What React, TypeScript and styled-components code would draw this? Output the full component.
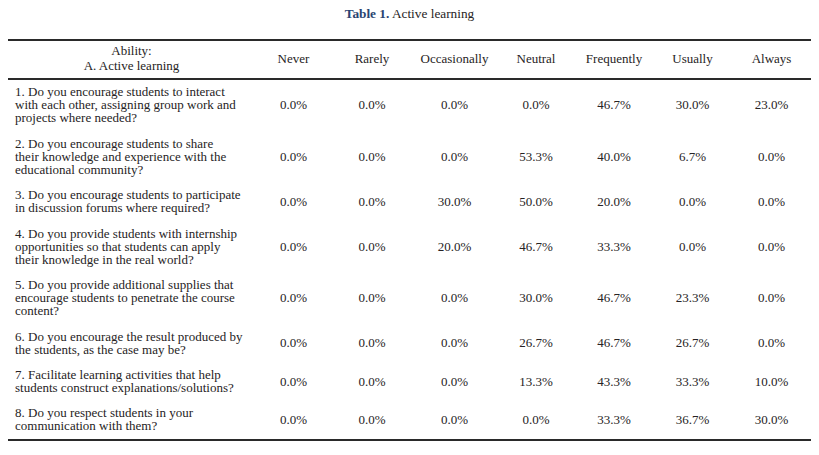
import React from "react";
import styled, { createGlobalStyle } from "styled-components";

const Global = createGlobalStyle`
  html, body { margin: 0; padding: 0; background: #ffffff; }
  body { font-family: "Liberation Serif", "Times New Roman", serif; color: #262324; }
`;

const Page = styled.div`
  width: 819px;
  height: 455px;
  padding: 6px 0 0 8px;
  box-sizing: border-box;
`;

const Title = styled.div`
  width: 803px;
  text-align: center;
  font-size: 13.3px;
  line-height: 15px;
  margin-bottom: 18px;
`;

const TitleLabel = styled.span`
  font-weight: bold;
  color: #2a4471;
`;

const Table = styled.div`
  width: 803px;
  border-top: 2px solid #2a2a2a;
  border-bottom: 2px solid #2a2a2a;
  font-size: 13px;
`;

const COLS = "247px 77px 80px 85px 78px 78px 79px 79px";

const HeaderRow = styled.div`
  display: grid;
  grid-template-columns: ${COLS};
  align-items: center;
  border-bottom: 2px solid #2a2a2a;
  padding: 2px 0 4.5px;
  line-height: 15px;
`;

const HeadCell = styled.div`
  text-align: center;
`;

const Row = styled.div`
  display: grid;
  grid-template-columns: ${COLS};
  align-items: center;
  padding: 5.6px 0 6.9px;
  line-height: 13px;
`;

const Question = styled.div`
  padding-left: 7px;
  padding-right: 4px;
  white-space: pre-line;
`;

const Value = styled.div`
  text-align: center;
`;

const columns = ["Never", "Rarely", "Occasionally", "Neutral", "Frequently", "Usually", "Always"];

const rows: { q: string; v: string[] }[] = [
  {
    q: "1. Do you encourage students to interact\nwith each other, assigning group work and\nprojects where needed?",
    v: ["0.0%", "0.0%", "0.0%", "0.0%", "46.7%", "30.0%", "23.0%"],
  },
  {
    q: "2. Do you encourage students to share\ntheir knowledge and experience with the\neducational community?",
    v: ["0.0%", "0.0%", "0.0%", "53.3%", "40.0%", "6.7%", "0.0%"],
  },
  {
    q: "3. Do you encourage students to participate\nin discussion forums where required?",
    v: ["0.0%", "0.0%", "30.0%", "50.0%", "20.0%", "0.0%", "0.0%"],
  },
  {
    q: "4. Do you provide students with internship\nopportunities so that students can apply\ntheir knowledge in the real world?",
    v: ["0.0%", "0.0%", "20.0%", "46.7%", "33.3%", "0.0%", "0.0%"],
  },
  {
    q: "5. Do you provide additional supplies that\nencourage students to penetrate the course\ncontent?",
    v: ["0.0%", "0.0%", "0.0%", "30.0%", "46.7%", "23.3%", "0.0%"],
  },
  {
    q: "6. Do you encourage the result produced by\nthe students, as the case may be?",
    v: ["0.0%", "0.0%", "0.0%", "26.7%", "46.7%", "26.7%", "0.0%"],
  },
  {
    q: "7. Facilitate learning activities that help\nstudents construct explanations/solutions?",
    v: ["0.0%", "0.0%", "0.0%", "13.3%", "43.3%", "33.3%", "10.0%"],
  },
  {
    q: "8. Do you respect students in your\ncommunication with them?",
    v: ["0.0%", "0.0%", "0.0%", "0.0%", "33.3%", "36.7%", "30.0%"],
  },
];

export default function App() {
  return (
    <>
      <Global />
      <Page>
        <Title>
          <TitleLabel>Table 1.</TitleLabel> Active learning
        </Title>
        <Table>
          <HeaderRow>
            <HeadCell>
              Ability:
              <br />
              A. Active learning
            </HeadCell>
            {columns.map((c) => (
              <HeadCell key={c}>{c}</HeadCell>
            ))}
          </HeaderRow>
          {rows.map((r, i) => (
            <Row key={i}>
              <Question>{r.q}</Question>
              {r.v.map((v, j) => (
                <Value key={j}>{v}</Value>
              ))}
            </Row>
          ))}
        </Table>
      </Page>
    </>
  );
}
